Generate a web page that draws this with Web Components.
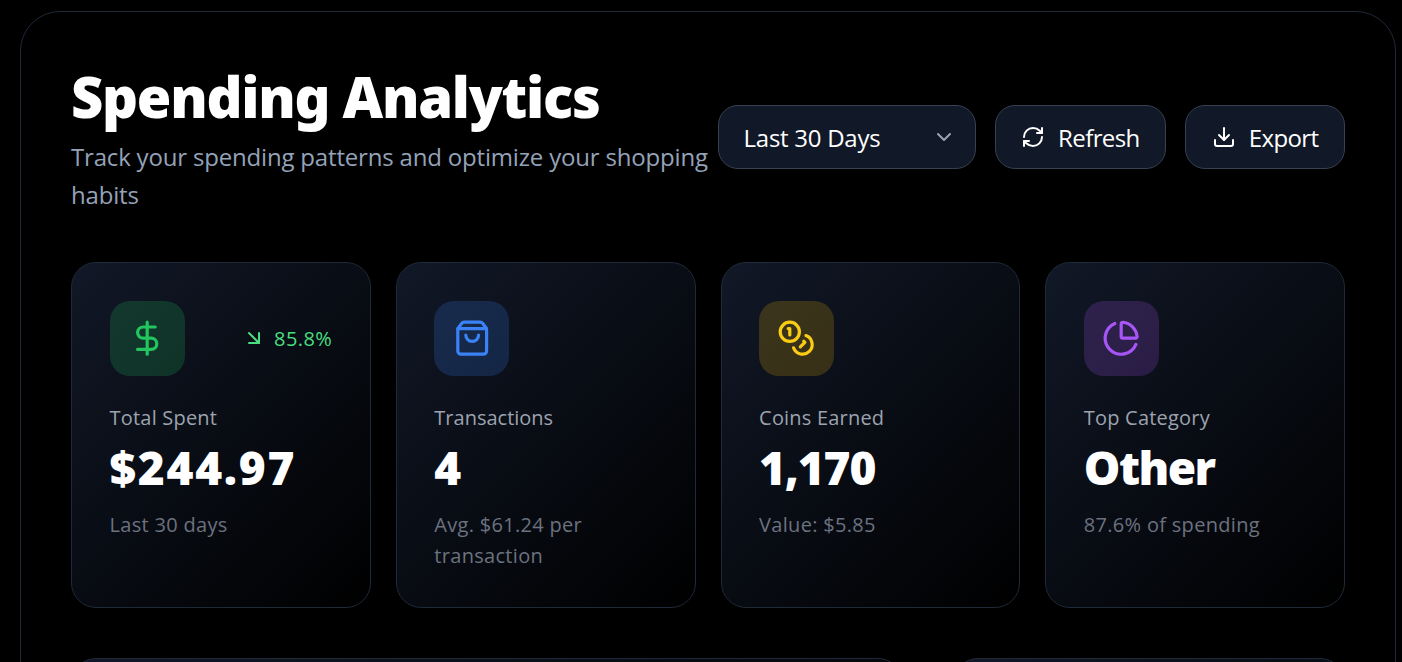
<!DOCTYPE html>
<html>
<head>
<meta charset="utf-8">
<style>
    html, body { margin: 0; height: 100%; overflow: hidden; background: #000; }
    body { font-family: "Open Sans", "Noto Sans", sans-serif; color: #fff; padding: 11px 6px 0 20px; box-sizing: border-box; }
</style>
</head>
<body>

<analytics-frame>
    <page-header>
        <span slot="title">Spending Analytics</span>
        <span slot="subtitle">Track your spending patterns and optimize your shopping habits</span>
        <period-select slot="controls">Last 30 Days</period-select>
        <action-button slot="controls" icon="refresh">Refresh</action-button>
        <action-button slot="controls" icon="download">Export</action-button>
    </page-header>

    <stat-grid>
        <stat-card icon="dollar" tone="green" trend="85.8%">
            <span slot="label">Total Spent</span>
            <span slot="value" style="letter-spacing: 1.7px">$244.97</span>
            <span slot="note">Last 30 days</span>
        </stat-card>
        <stat-card icon="bag" tone="blue">
            <span slot="label" style="letter-spacing: 0">Transactions</span>
            <span slot="value">4</span>
            <span slot="note">Avg. $61.24 per transaction</span>
        </stat-card>
        <stat-card icon="coins" tone="yellow">
            <span slot="label">Coins Earned</span>
            <span slot="value">1,170</span>
            <span slot="note">Value: $5.85</span>
        </stat-card>
        <stat-card icon="pie" tone="purple">
            <span slot="label">Top Category</span>
            <span slot="value" style="letter-spacing: -1.6px">Other</span>
            <span slot="note">87.6% of spending</span>
        </stat-card>
    </stat-grid>

    <panel-row>
        <chart-panel></chart-panel>
        <chart-panel></chart-panel>
    </panel-row>
</analytics-frame>

<script>
const ICONS = {
    dollar: '<line x1="12" x2="12" y1="2" y2="22"/><path d="M17 5H9.5a3.5 3.5 0 0 0 0 7h5a3.5 3.5 0 0 1 0 7H6"/>',
    bag: '<path d="M16 10a4 4 0 0 1-8 0"/><path d="M3.103 6.034h17.794"/><path d="M3.4 5.467a2 2 0 0 0-.4 1.2V20a2 2 0 0 0 2 2h14a2 2 0 0 0 2-2V6.667a2 2 0 0 0-.4-1.2l-2.1-2.8A2 2 0 0 0 17 2H7a2 2 0 0 0-1.6.8z"/>',
    coins: '<circle cx="8" cy="8" r="6"/><path d="M18.09 10.37A6 6 0 1 1 10.34 18"/><path d="M7 6h1v4"/><path d="m16.71 13.88.7.71-2.82 2.82"/>',
    pie: '<path d="M21 12c.552 0 1.005-.449.95-.998a10 10 0 0 0-8.953-8.951c-.55-.055-.998.398-.998.95v8a1 1 0 0 0 1 1z"/><path d="M21.21 15.89A10 10 0 1 1 8 2.83"/>',
    refresh: '<path d="M3 12a9 9 0 0 1 9-9 9.75 9.75 0 0 1 6.74 2.74L21 8"/><path d="M21 3v5h-5"/><path d="M21 12a9 9 0 0 1-9 9 9.75 9.75 0 0 1-6.74-2.74L3 16"/><path d="M8 16H3v5"/>',
    download: '<path d="M12 15V3"/><path d="M21 15v4a2 2 0 0 1-2 2H5a2 2 0 0 1-2-2v-4"/><path d="m7 10 5 5 5-5"/>',
    chevron: '<path d="m6 9 6 6 6-6"/>',
    trend: '<path d="m7 7 10 10"/><path d="M17 7v10H7"/>'
};

function svgIcon(name, size) {
    return `<svg width="${size}" height="${size}" viewBox="0 0 24 24" fill="none" stroke="currentColor" stroke-width="2" stroke-linecap="round" stroke-linejoin="round" style="display:block;flex:none">${ICONS[name]}</svg>`;
}

class AnalyticsFrame extends HTMLElement {
    constructor() {
        super();
        this.attachShadow({ mode: 'open' });
        this.shadowRoot.innerHTML = `
            <style>
                :host {
                    display: block;
                    box-sizing: border-box;
                    padding: 50px;
                    border: 1px solid #1f2937;
                    border-radius: 40px;
                    min-height: 900px;
                }
            </style>
            <slot></slot>
        `;
    }
}

class PageHeader extends HTMLElement {
    constructor() {
        super();
        this.attachShadow({ mode: 'open' });
        this.shadowRoot.innerHTML = `
            <style>
                :host {
                    display: flex;
                    align-items: center;
                    justify-content: space-between;
                    gap: 4px;
                    margin-bottom: 48px;
                }
                h1 {
                    margin: 0 0 8px;
                    font-size: 56px;
                    line-height: 68px;
                    font-weight: 900;
                    font-family: "Noto Sans", sans-serif;
                    letter-spacing: -1.25px;
                }
                p {
                    margin: 0;
                    font-size: 24px;
                    line-height: 38px;
                    color: #94a3b8;
                    letter-spacing: -0.18px;
                }
                .controls { display: flex; gap: 19px; flex: none; margin-bottom: 2px; }
            </style>
            <div>
                <h1><slot name="title"></slot></h1>
                <p><slot name="subtitle"></slot></p>
            </div>
            <div class="controls"><slot name="controls"></slot></div>
        `;
    }
}

class PeriodSelect extends HTMLElement {
    constructor() {
        super();
        this.attachShadow({ mode: 'open' });
        this.shadowRoot.innerHTML = `
            <style>
                :host {
                    display: flex;
                    align-items: center;
                    justify-content: space-between;
                    box-sizing: border-box;
                    width: 258px;
                    height: 64px;
                    padding: 0 19px 0 25px;
                    background: #111827;
                    border: 1px solid #374151;
                    border-radius: 20px;
                    font-size: 24px;
                    letter-spacing: -0.27px;
                }
                span { color: #9ca3af; }
            </style>
            <slot></slot>
            <span>${svgIcon('chevron', 24)}</span>
        `;
    }
}

class ActionButton extends HTMLElement {
    constructor() {
        super();
        this.attachShadow({ mode: 'open' });
        this.shadowRoot.innerHTML = `
            <style>
                :host {
                    display: flex;
                    align-items: center;
                    gap: 13px;
                    box-sizing: border-box;
                    height: 64px;
                    padding: 0 25.5px;
                    background: #111827;
                    border: 1px solid #374151;
                    border-radius: 20px;
                    font-size: 24px;
                    letter-spacing: -0.6px;
                }
            </style>
            ${svgIcon(this.getAttribute('icon'), 24)}
            <slot></slot>
        `;
    }
}

class StatGrid extends HTMLElement {
    constructor() {
        super();
        this.attachShadow({ mode: 'open' });
        this.shadowRoot.innerHTML = `
            <style>
                :host {
                    display: grid;
                    grid-template-columns: repeat(4, 1fr);
                    gap: 25px;
                    margin-bottom: 50px;
                }
            </style>
            <slot></slot>
        `;
    }
}

const TONES = {
    green: ['#22c55e', 'rgba(34, 197, 94, 0.2)', '#4ade80'],
    blue: ['#3b82f6', 'rgba(59, 130, 246, 0.2)', '#60a5fa'],
    yellow: ['#facc15', 'rgba(234, 179, 8, 0.2)', '#facc15'],
    purple: ['#a855f7', 'rgba(168, 85, 247, 0.2)', '#c084fc']
};

class StatCard extends HTMLElement {
    constructor() {
        super();
        this.attachShadow({ mode: 'open' });
        const tone = TONES[this.getAttribute('tone')];
        const trend = this.getAttribute('trend');
        this.shadowRoot.innerHTML = `
            <style>
                :host {
                    display: block;
                    box-sizing: border-box;
                    padding: 37.6px 37.6px 36.4px;
                    background: linear-gradient(135deg, #111827 0%, #000 100%);
                    border: 1px solid #1f2937;
                    border-radius: 25px;
                }
                .top {
                    display: flex;
                    align-items: center;
                    justify-content: space-between;
                    margin-bottom: 27px;
                }
                .icon {
                    display: flex;
                    align-items: center;
                    justify-content: center;
                    width: 75px;
                    height: 75px;
                    border-radius: 20px;
                    color: ${tone[0]};
                    background: ${tone[1]};
                }
                .trend {
                    display: flex;
                    align-items: center;
                    gap: 8px;
                    font-size: 20px;
                    letter-spacing: 0.4px;
                    color: ${tone[2]};
                }
                .label {
                    font-size: 20px;
                    line-height: 30px;
                    letter-spacing: 0.2px;
                    color: #9ca3af;
                }
                .value {
                    font-family: "Noto Sans", sans-serif;
                    font-size: 46px;
                    line-height: 54px;
                    font-weight: 900;
                    letter-spacing: -1.2px;
                    margin: 7px 0 15px;
                }
                .note {
                    font-size: 20px;
                    line-height: 31px;
                    letter-spacing: 0.3px;
                    color: #6b7280;
                }
            </style>
            <div class="top">
                <div class="icon">${svgIcon(this.getAttribute('icon'), 38.4)}</div>
                ${trend ? `<div class="trend">${svgIcon('trend', 24)}<span>${trend}</span></div>` : ''}
            </div>
            <div class="label"><slot name="label"></slot></div>
            <div class="value"><slot name="value"></slot></div>
            <div class="note"><slot name="note"></slot></div>
        `;
    }
}

class PanelRow extends HTMLElement {
    constructor() {
        super();
        this.attachShadow({ mode: 'open' });
        this.shadowRoot.innerHTML = `
            <style>
                :host {
                    display: grid;
                    grid-template-columns: 832fr 392fr;
                    gap: 50px;
                }
            </style>
            <slot></slot>
        `;
    }
}

class ChartPanel extends HTMLElement {
    constructor() {
        super();
        this.attachShadow({ mode: 'open' });
        this.shadowRoot.innerHTML = `
            <style>
                :host {
                    display: block;
                    box-sizing: border-box;
                    height: 400px;
                    background: linear-gradient(135deg, #111827 0%, #000 100%);
                    border: 1px solid #1f2937;
                    border-radius: 25px;
                }
            </style>
        `;
    }
}

customElements.define('analytics-frame', AnalyticsFrame);
customElements.define('page-header', PageHeader);
customElements.define('period-select', PeriodSelect);
customElements.define('action-button', ActionButton);
customElements.define('stat-grid', StatGrid);
customElements.define('stat-card', StatCard);
customElements.define('panel-row', PanelRow);
customElements.define('chart-panel', ChartPanel);
</script>
</body>
</html>
